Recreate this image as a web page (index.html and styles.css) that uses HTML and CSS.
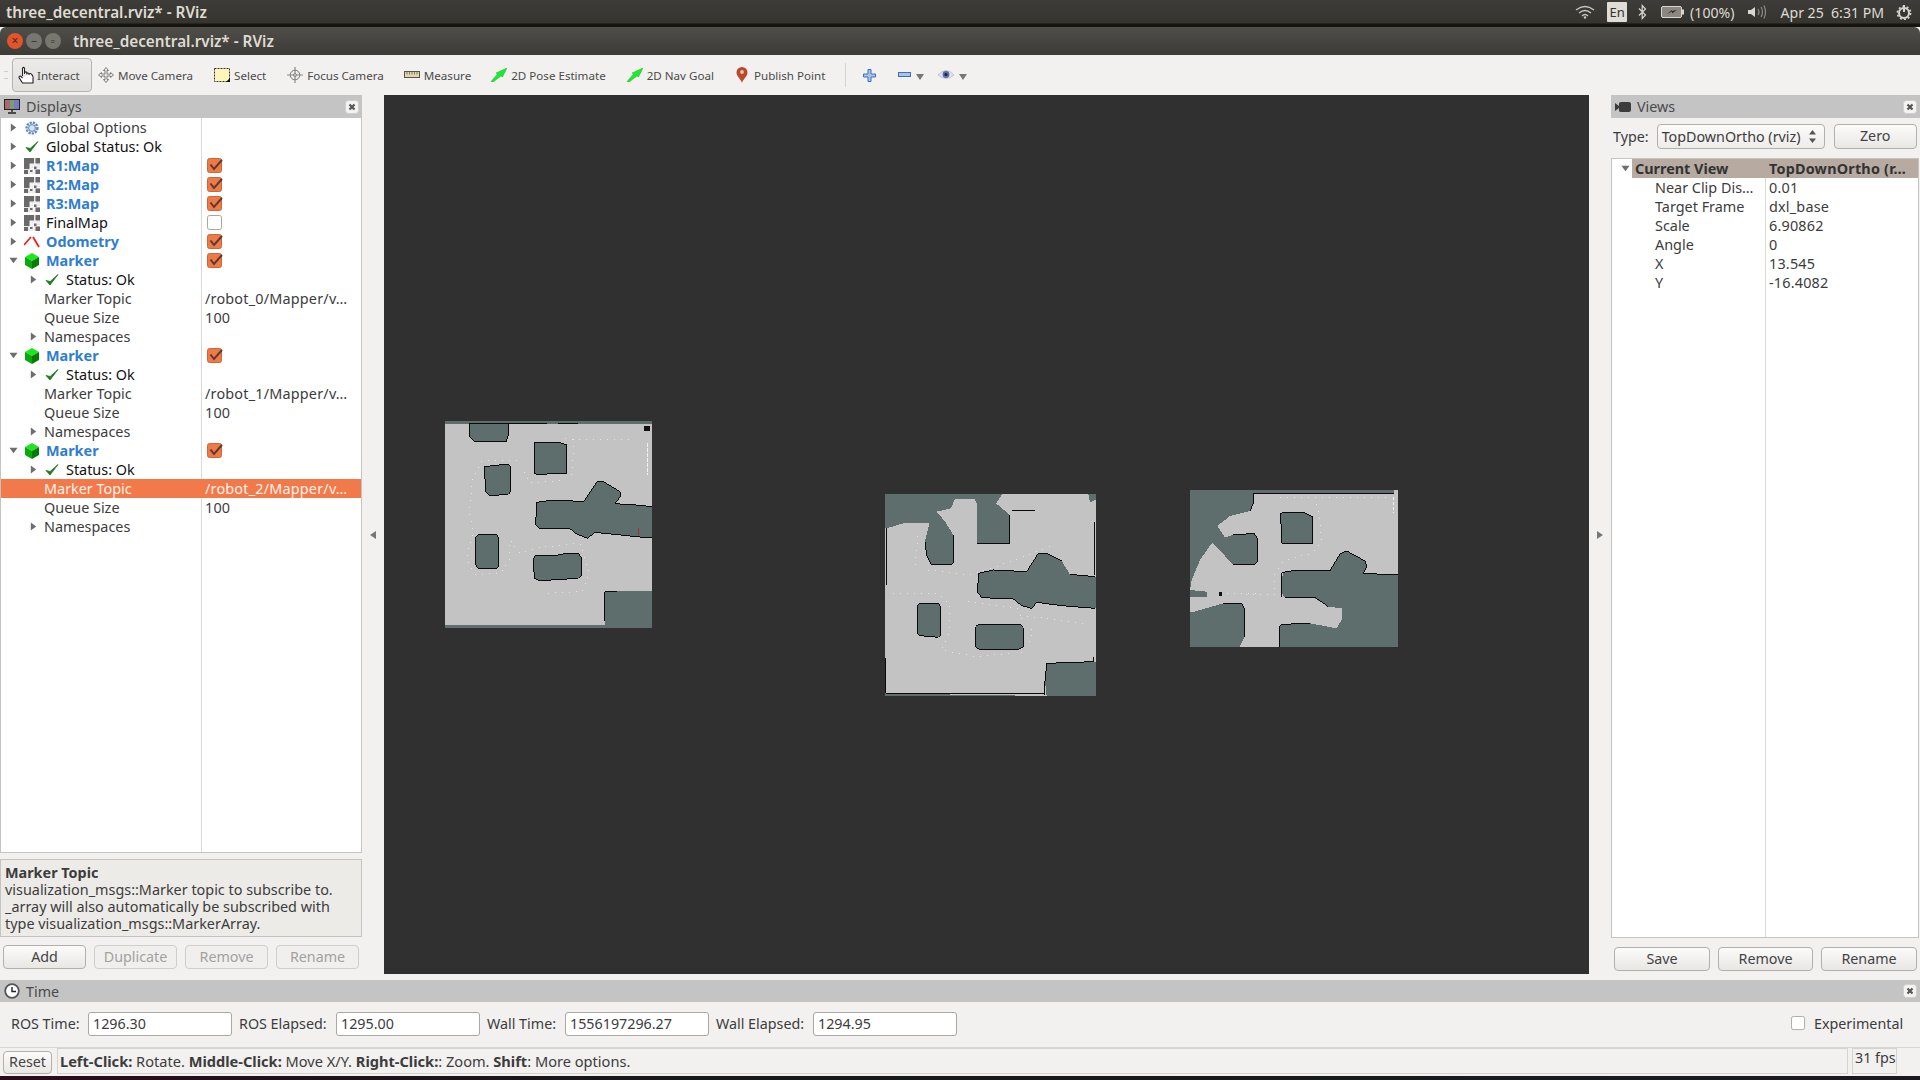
FILE: index.html
```html
<!DOCTYPE html>
<html lang="en">
<head>
    <meta charset="UTF-8">
    <title>three_decentral.rviz* - RViz</title>
    <link rel="stylesheet" href="styles.css">
</head>
<body>
    <svg class="defs" xmlns="http://www.w3.org/2000/svg">
        <symbol id="i-right" viewBox="0 0 8 10"><path d="M1 0.5 7 5 1 9.5Z" fill="#6e6e6e"/></symbol>
        <symbol id="i-down" viewBox="0 0 10 8"><path d="M0.5 1H9.5L5 7Z" fill="#6e6e6e"/></symbol>
        <symbol id="i-gear" viewBox="0 0 16 16"><circle cx="8" cy="8" r="5.4" fill="none" stroke="#5b86c9" stroke-width="2.4" stroke-dasharray="2.2 1"/><circle cx="8" cy="8" r="3.4" fill="#dce6f5" stroke="#4f7cc4"/></symbol>
        <symbol id="i-check" viewBox="0 0 16 16"><path d="M2 8.5 6 13 14 2.5 6.2 9.5Z" fill="#1f7a23" stroke="#1f7a23" stroke-width=".8"/></symbol>
        <symbol id="i-map" viewBox="0 0 16 16"><rect width="16" height="16" fill="#e6e6e6"/><path d="M5 5.500H16M5 8H16M5 10.500H16M5 13H16M7 5V16M9.500 5V16M12 5V16" stroke="#fff" stroke-width=".7"/><path d="M0 0H10V5.500H5.500V11H0ZM11.500 0H16V5.500H11.500ZM0 12H4V16H0ZM10 8.500H12.500V11H10ZM11.500 11.500H16V16H11.500ZM6 12H8.500V14H6Z" fill="#6a6a6a"/></symbol>
        <symbol id="i-odom" viewBox="0 0 16 16"><path d="M0 11 7 3M9 3 15 13" stroke="#f02020" stroke-width="1.8" fill="none"/></symbol>
        <symbol id="i-cube" viewBox="0 0 16 16"><path d="M8 0 15 4 8 8 1 4Z" fill="#1ee51e"/><path d="M1 4 8 8V16L1 12Z" fill="#0aa80a"/><path d="M15 4 8 8V16L15 12Z" fill="#067c06"/></symbol>
        <symbol id="i-on" viewBox="0 0 16 16"><rect x=".5" y=".5" width="14" height="14" rx="2" fill="#ee7a48" stroke="#c9683d"/><path d="M3.5 6.5 7 11 15 2" fill="none" stroke="#5f3a2c" stroke-width="2"/></symbol>
        <symbol id="i-off" viewBox="0 0 16 16"><rect x=".5" y=".5" width="14" height="14" rx="2" fill="#fff" stroke="#a9a6a1"/></symbol>
        <symbol id="i-close" viewBox="0 0 14 14"><rect x=".5" y=".5" width="13" height="13" rx="3" fill="#f4f3f2" stroke="#d0cfcc"/><path d="M4.5 4.5 9.5 9.5M9.5 4.5 4.5 9.5" stroke="#555" stroke-width="2.2"/></symbol>
    </svg>

    <div class="topbar">
        <span class="top-title">three_decentral.rviz* - RViz</span>
        <div class="tray">
            <svg class="tray-wifi" width="20" height="14" viewBox="0 0 20 14"><path d="M1 5Q10-2 19 5M4 8Q10 3 16 8M7 11Q10 8 13 11" fill="none" stroke="#c9c7c0" stroke-width="1.4"/><circle cx="10" cy="12.5" r="1.2" fill="#c9c7c0"/></svg>
            <span class="tray-lang">En</span>
            <svg class="tray-bt" width="9" height="16" viewBox="0 0 9 16"><path d="M1 4.5 7.5 11 4.2 14.5V1.5L7.5 5 1 11.5" fill="none" stroke="#d8d6cf" stroke-width="1.2"/></svg>
            <svg class="tray-batt" width="23" height="12" viewBox="0 0 23 12"><rect x=".5" y=".5" width="20" height="11" rx="1.5" fill="#8a8880" stroke="#d8d6cf"/><rect x="21" y="3.5" width="2" height="5" fill="#d8d6cf"/><path d="M6 8 11 5.5 11 7.5 16 4 11 5 11 4Z" fill="#2d2c28"/></svg>
            <span class="tray-pct">(100%)</span>
            <svg class="tray-vol" width="20" height="16" viewBox="0 0 20 16"><path d="M1 6H4L8 3V13L4 10H1Z" fill="#d8d6cf"/><path d="M11 5Q13 8 11 11M14 3Q17 8 14 13M17 1.5Q20 8 17 14.5" fill="none" stroke="#8d8b84" stroke-width="1.2"/></svg>
            <span class="tray-date">Apr 25&nbsp; 6:31 PM</span>
            <svg class="tray-gear" width="16" height="16" viewBox="0 0 16 16"><circle cx="8" cy="9" r="5" fill="none" stroke="#d8d6cf" stroke-width="2"/><circle cx="8" cy="9" r="6.6" fill="none" stroke="#d8d6cf" stroke-width="1.6" stroke-dasharray="2 2.2"/><path d="M8 1V8" stroke="#d8d6cf" stroke-width="2"/></svg>
        </div>
    </div>

    <div class="titlebar">
        <div class="win-buttons">
            <span class="win-btn win-close">×</span>
            <span class="win-btn">–</span>
            <span class="win-btn">▫</span>
        </div>
        <span class="win-title">three_decentral.rviz* - RViz</span>
    </div>

    <div class="toolbar">
        <span class="grip"></span>
        <div class="tool tool-active">
            <svg width="17" height="18" viewBox="0 0 17 18"><path d="M4.5 10V2.2Q5.5.6 6.5 2.2V8M6.5 8V6.5Q7.7 5.4 8.8 6.5V8.5M8.8 7.5Q10 6.4 11 7.5V9M11 8Q12.4 7 13.5 8.2 15.5 10 15 14V17H4.5L1 11.5Q1 9.8 2.5 10L4.5 12" fill="#fff" stroke="#222" stroke-width="1.1"/></svg>
            <span>Interact</span>
        </div>
        <div class="tool tool-move">
            <svg width="16" height="16" viewBox="0 0 16 16"><path d="M8 .5 10.5 3.5H9V7H12.5V5.5L15.5 8 12.5 10.5V9H9V12.5H10.5L8 15.5 5.5 12.5H7V9H3.5V10.5L.5 8 3.5 5.5V7H7V3.5H5.5Z" fill="#e8e8e8" stroke="#666" stroke-width=".8"/></svg>
            <span>Move Camera</span>
        </div>
        <div class="tool tool-select">
            <svg width="16" height="16" viewBox="0 0 16 16"><rect x=".5" y="1.5" width="15" height="13" fill="#fdf6b8" stroke="#333" stroke-dasharray="2 1"/><path d="M12 15H16V11Z" fill="#111"/></svg>
            <span>Select</span>
        </div>
        <div class="tool tool-focus">
            <svg width="16" height="16" viewBox="0 0 16 16"><circle cx="8" cy="8" r="4.8" fill="#eee" stroke="#777"/><path d="M8 0V16M0 8H16" stroke="#888" stroke-width="1.2"/><circle cx="8" cy="8" r="1.6" fill="#bbb" stroke="#777" stroke-width=".6"/></svg>
            <span>Focus Camera</span>
        </div>
        <div class="tool tool-measure">
            <svg width="16" height="8" viewBox="0 0 16 8"><rect x=".5" y=".5" width="15" height="6" fill="#e2d9a6" stroke="#555"/><path d="M3 1V3.5M5.5 1V3.5M8 1V3.5M10.5 1V3.5M13 1V3.5" stroke="#555" stroke-width=".7"/></svg>
            <span>Measure</span>
        </div>
        <div class="tool tool-pose">
            <svg width="16" height="14" viewBox="0 0 16 14"><path d="M0 13.5 6.5 6 5 5 16 0 11.5 9 10 8 2 14Z" fill="#19ee2c" stroke="#0e9e1c" stroke-width=".4"/></svg>
            <span>2D Pose Estimate</span>
        </div>
        <div class="tool tool-goal">
            <svg width="16" height="14" viewBox="0 0 16 14"><path d="M0 13.5 6.5 6 5 5 16 0 11.5 9 10 8 2 14Z" fill="#19ee2c" stroke="#0e9e1c" stroke-width=".4"/></svg>
            <span>2D Nav Goal</span>
        </div>
        <div class="tool tool-point">
            <svg width="12" height="16" viewBox="0 0 12 16"><path d="M6 16C5 12 .5 9.5.5 5.5a5.5 5.5 0 0 1 11 0C11.500 9.500 7 12 6 16Z" fill="#b8492a"/><circle cx="6" cy="5" r="1.9" fill="#e9c7a8"/></svg>
            <span>Publish Point</span>
        </div>
        <span class="tool-sep"></span>
        <svg class="tb-plus" width="13" height="13" viewBox="0 0 13 13"><path d="M5 .5H8V5H12.500V8H8V12.500H5V8H.5V5H5Z" fill="#a9c4ea" stroke="#3f6fb5"/></svg>
        <svg class="tb-minus" width="13" height="6" viewBox="0 0 13 6"><rect x=".5" y=".5" width="12" height="4" fill="#a9c4ea" stroke="#3f6fb5"/></svg>
        <svg class="tb-arrow" width="8" height="6" viewBox="0 0 8 6"><path d="M0 0H8L4 6Z" fill="#777"/></svg>
        <svg class="tb-eye" width="16" height="12" viewBox="0 0 16 12"><path d="M0 6Q8-3 16 6 8 13 0 6Z" fill="#dfe3ee" stroke="#a9adba" stroke-width=".6"/><circle cx="8" cy="5.500" r="3.400" fill="#5a6ca8"/><circle cx="8" cy="5.500" r="1.500" fill="#1c2340"/></svg>
        <svg class="tb-arrow" width="8" height="6" viewBox="0 0 8 6"><path d="M0 0H8L4 6Z" fill="#777"/></svg>
    </div>

    <div class="workspace">
        <div class="dock dock-left">
            <div class="dock-title">
                <svg width="16" height="15" viewBox="0 0 16 15"><rect x=".5" y=".5" width="15" height="10" fill="#7a9a7a" stroke="#222"/><rect x="1" y="1" width="5" height="9" fill="#a86a70"/><rect x="10" y="1" width="5" height="9" fill="#7a7ac0"/><path d="M8 11V13M4 14H12" stroke="#222" stroke-width="1.400"/></svg>
                <span class="dock-name">Displays</span>
                <svg class="close" width="14" height="14"><use href="#i-close"/></svg>
            </div>
            <div class="tree tree-displays">
                <div class="row"><div class="name"><svg class="tw"><use href="#i-right"/></svg><svg class="ico"><use href="#i-gear"/></svg><span class="muted">Global Options</span></div><div class="val"></div></div>
                <div class="row"><div class="name"><svg class="tw"><use href="#i-right"/></svg><svg class="ico"><use href="#i-check"/></svg><span class="dark">Global Status: Ok</span></div><div class="val"></div></div>
                <div class="row"><div class="name"><svg class="tw"><use href="#i-right"/></svg><svg class="ico"><use href="#i-map"/></svg><span class="blue">R1:Map</span></div><div class="val"><svg class="cb"><use href="#i-on"/></svg></div></div>
                <div class="row"><div class="name"><svg class="tw"><use href="#i-right"/></svg><svg class="ico"><use href="#i-map"/></svg><span class="blue">R2:Map</span></div><div class="val"><svg class="cb"><use href="#i-on"/></svg></div></div>
                <div class="row"><div class="name"><svg class="tw"><use href="#i-right"/></svg><svg class="ico"><use href="#i-map"/></svg><span class="blue">R3:Map</span></div><div class="val"><svg class="cb"><use href="#i-on"/></svg></div></div>
                <div class="row"><div class="name"><svg class="tw"><use href="#i-right"/></svg><svg class="ico"><use href="#i-map"/></svg><span class="dark">FinalMap</span></div><div class="val"><svg class="cb"><use href="#i-off"/></svg></div></div>
                <div class="row"><div class="name"><svg class="tw"><use href="#i-right"/></svg><svg class="ico"><use href="#i-odom"/></svg><span class="blue">Odometry</span></div><div class="val"><svg class="cb"><use href="#i-on"/></svg></div></div>

                <div class="row"><div class="name"><svg class="tw"><use href="#i-down"/></svg><svg class="ico"><use href="#i-cube"/></svg><span class="blue">Marker</span></div><div class="val"><svg class="cb"><use href="#i-on"/></svg></div></div>
                <div class="row"><div class="name sub"><svg class="tw"><use href="#i-right"/></svg><svg class="ico"><use href="#i-check"/></svg><span class="dark">Status: Ok</span></div><div class="val"></div></div>
                <div class="row"><div class="name prop">Marker Topic</div><div class="val">/robot_0/Mapper/v…</div></div>
                <div class="row"><div class="name prop">Queue Size</div><div class="val">100</div></div>
                <div class="row"><div class="name sub"><svg class="tw tw-gap"><use href="#i-right"/></svg>Namespaces</div><div class="val"></div></div>

                <div class="row"><div class="name"><svg class="tw"><use href="#i-down"/></svg><svg class="ico"><use href="#i-cube"/></svg><span class="blue">Marker</span></div><div class="val"><svg class="cb"><use href="#i-on"/></svg></div></div>
                <div class="row"><div class="name sub"><svg class="tw"><use href="#i-right"/></svg><svg class="ico"><use href="#i-check"/></svg><span class="dark">Status: Ok</span></div><div class="val"></div></div>
                <div class="row"><div class="name prop">Marker Topic</div><div class="val">/robot_1/Mapper/v…</div></div>
                <div class="row"><div class="name prop">Queue Size</div><div class="val">100</div></div>
                <div class="row"><div class="name sub"><svg class="tw tw-gap"><use href="#i-right"/></svg>Namespaces</div><div class="val"></div></div>

                <div class="row"><div class="name"><svg class="tw"><use href="#i-down"/></svg><svg class="ico"><use href="#i-cube"/></svg><span class="blue">Marker</span></div><div class="val"><svg class="cb"><use href="#i-on"/></svg></div></div>
                <div class="row"><div class="name sub"><svg class="tw"><use href="#i-right"/></svg><svg class="ico"><use href="#i-check"/></svg><span class="dark">Status: Ok</span></div><div class="val"></div></div>
                <div class="row row-selected"><div class="name prop">Marker Topic</div><div class="val">/robot_2/Mapper/v…</div></div>
                <div class="row"><div class="name prop">Queue Size</div><div class="val">100</div></div>
                <div class="row"><div class="name sub"><svg class="tw tw-gap"><use href="#i-right"/></svg>Namespaces</div><div class="val"></div></div>
            </div>
            <div class="help">
                <strong>Marker Topic</strong><br>
                visualization_msgs::Marker topic to subscribe to.<br>
                _array will also automatically be subscribed with<br>
                type visualization_msgs::MarkerArray.
            </div>
            <div class="btn-row btn-row-left">
                <button class="btn">Add</button>
                <button class="btn" disabled>Duplicate</button>
                <button class="btn" disabled>Remove</button>
                <button class="btn" disabled>Rename</button>
            </div>
        </div>

        <div class="split"><svg width="6" height="8" viewBox="0 0 6 8"><path d="M6 0V8L0 4Z" fill="#777"/></svg></div>

        <div class="viewport">
            <svg class="maps" width="1205" height="879" xmlns="http://www.w3.org/2000/svg">
                <!-- map coordinates are 3x, taken from the zoomed crops -->
                <g transform="translate(46 315) scale(.33333)">
                    <rect x="45" y="33" width="621" height="621" fill="#c3c3c3"/>
                    <rect x="45" y="33" width="621" height="8" fill="#5e6e6c"/>
                    <rect x="45" y="645" width="621" height="9" fill="#5e6e6c"/>
                    <path class="obs" d="M117 41H237V70L228 95H135L120 82Z"/>
                    <path class="obs" d="M313 97H385L411 105V190L320 193 313 190Z"/>
                    <path class="obs" d="M163 170 235 162 242 170V245L235 253 178 257 167 245Z"/>
                    <path class="obs-soft" d="M320 277 360 271 462 274 500 216H522L570 245 572 258 555 281 618 285 666 290V384L630 381 495 367 472 385 440 372 420 357 330 356 317 345Z"/>
                    <path class="edge" d="M666 290 618 285 555 281 572 258 570 245 522 216H500L462 274 360 271 320 277 317 345 330 356H420L440 372 472 385 495 367 630 381 666 384"/>
                    <path class="obs" d="M136 385 145 373H200L206 385V470L200 476H145L137 465Z"/>
                    <path class="obs" d="M310 445 318 436H380L410 430H445L455 445V495L445 505 330 512 313 505Z"/>
                    <path class="obs-soft" d="M525 645V545L666 543V645Z"/>
                    <path class="edge" d="M525 633V545H560"/>
                    <path class="edge" d="M237 41H350M385 41H443"/>
                    <path class="trail" d="M405 85 430 88 610 90M430 88 428 190 400 212 300 218 272 170 260 152 155 152 128 205 118 310 130 360 110 445 135 493 210 490 240 450 240 390 270 430 330 412 450 400 478 490 455 545 350 550"/>
                    <path class="trail-bright" d="M652 100V195"/>
                    <path d="M643 47H660V63H643Z" fill="#111"/>
                    <path d="M625 355V376" stroke="#a03030" stroke-width="3"/>
                </g>
                <g transform="translate(491 390) scale(.33333)">
                    <rect x="30" y="27" width="632" height="606" fill="#c3c3c3"/>
                    <path class="obs-soft" d="M30 27H382L363 55 405 90V177H307V60L298 42H240L228 70 185 80 210 110 235 150V235L225 240H170L155 210 150 170 163 115H85L35 130H30Z"/>
                    <path class="obs" d="M128 362 135 355H190L197 365V450L190 457 135 452 128 445Z"/>
                    <path class="obs" d="M302 425 310 418H435L445 428V485L435 492 315 495 302 485Z"/>
                    <path class="obs-soft" d="M310 265 355 255 455 260 490 205H515L560 228 585 268 662 275V370L560 362 485 352 470 370 440 362 415 342 320 338 308 322Z"/>
                    <path class="edge" d="M455 260 355 255 310 265 308 322 320 338 415 342 440 362 470 370 485 352 560 362 660 370M455 260 490 205H515L560 228M585 268 660 275"/>
                    <path class="obs-soft" d="M515 535 662 530V633H515L510 590Z"/>
                    <path class="edge" d="M510 630V590L515 535 655 530V515"/>
                    <path class="obs-soft" d="M30 625 190 628 515 633H30ZM640 27H662V45L645 52Z"/>
                    <path class="edge" d="M35 130V300M405 90V177H307M235 150V235L225 240H170L155 210 150 170M32 520V625H190 510M660 110V270M410 78H480"/>
                    <path class="trail" d="M55 325H190L225 360 225 440 200 495 300 515 450 500 475 440 430 390 630 415M120 240 130 140M160 255 290 270 420 225 530 182M280 350 430 370"/>
                </g>
                <g transform="translate(796 385) scale(.33333)">
                    <rect x="30" y="30" width="624" height="470" fill="#c3c3c3"/>
                    <path class="obs-soft" d="M30 30H222V65L210 93 150 108 112 138 135 172 160 165 222 160 232 175V245L222 255H160L97 187 60 240 35 300 30 330Z"/>
                    <path class="obs-soft" d="M222 30H642V40H222Z"/>
                    <path class="obs-soft" d="M30 330 80 335V350H30Z"/>
                    <path class="obs" d="M302 100 310 97H370L398 110V190H305Z"/>
                    <path class="obs-soft" d="M35 397 130 370H185L193 385V470L180 500H30V397Z"/>
                    <path class="obs-soft" d="M308 278 350 270 450 272 480 222 500 213 555 243 560 260 550 280 654 285V500H298V440L305 433 390 430 470 445 487 415V385L445 380 405 355 315 352 305 340Z"/>
                    <path class="edge" d="M222 40H642M222 40V65L210 93M160 165 222 160 232 175V245L222 255H160M130 370H185L193 385V470M305 352 305 278 350 270 450 272 480 222 500 213 555 243 560 260 550 280 654 285M298 500V440L305 433 390 430M315 352H405L445 380"/>
                    <path class="trail" d="M300 52H620M405 52 420 120 425 185 395 220 310 242 285 280 285 345 180 342M120 342H240"/>
                    <path class="trail-bright" d="M640 50V100"/>
                    <path d="M116 335H125V348H116Z" fill="#111"/>
                </g>
            </svg>
        </div>

        <div class="split"><svg width="6" height="8" viewBox="0 0 6 8"><path d="M0 0V8L6 4Z" fill="#777"/></svg></div>

        <div class="dock dock-right">
            <div class="dock-title">
                <svg width="16" height="10" viewBox="0 0 16 10"><path d="M0 1 4 4V1.500Q4 0 6 0H14Q16 0 16 2V8Q16 10 14 10H6Q4 10 4 8.500V6L0 9Z" fill="#3c3c3c"/></svg>
                <span class="dock-name">Views</span>
                <svg class="close" width="14" height="14"><use href="#i-close"/></svg>
            </div>
            <div class="type-row">
                <span>Type:</span>
                <div class="combo"><span>TopDownOrtho (rviz)</span><svg width="7" height="13" viewBox="0 0 7 13"><path d="M0 4.500 3.500 0 7 4.500ZM0 8.500H7L3.500 13Z" fill="#555"/></svg></div>
                <button class="btn btn-zero">Zero</button>
            </div>
            <div class="tree tree-views">
                <div class="row row-head"><div class="name"><svg class="tw tw-head"><use href="#i-down"/></svg><span>Current View</span></div><div class="val">TopDownOrtho (r…</div></div>
                <div class="row"><div class="name prop">Near Clip Dis…</div><div class="val">0.01</div></div>
                <div class="row"><div class="name prop">Target Frame</div><div class="val">dxl_base</div></div>
                <div class="row"><div class="name prop">Scale</div><div class="val">6.90862</div></div>
                <div class="row"><div class="name prop">Angle</div><div class="val">0</div></div>
                <div class="row"><div class="name prop">X</div><div class="val">13.545</div></div>
                <div class="row"><div class="name prop">Y</div><div class="val">-16.4082</div></div>
            </div>
            <div class="btn-row btn-row-right">
                <button class="btn">Save</button>
                <button class="btn">Remove</button>
                <button class="btn">Rename</button>
            </div>
        </div>
    </div>

    <div class="time-title">
        <svg width="16" height="16" viewBox="0 0 16 16"><circle cx="8" cy="8" r="6.800" fill="#fff" stroke="#555" stroke-width="1.800"/><path d="M8 4V8.500H12" fill="none" stroke="#222" stroke-width="1.400"/></svg>
        <span class="dock-name">Time</span>
        <svg class="close" width="14" height="14"><use href="#i-close"/></svg>
    </div>
    <div class="time-row">
        <label class="t-ros">ROS Time:</label><div class="field">1296.30</div>
        <label class="t-ela">ROS Elapsed:</label><div class="field">1295.00</div>
        <label class="t-wall">Wall Time:</label><div class="field">1556197296.27</div>
        <label class="t-wela">Wall Elapsed:</label><div class="field">1294.95</div>
        <svg class="exp-box" width="15" height="15"><use href="#i-off"/></svg>
        <label>Experimental</label>
    </div>

    <div class="statusbar">
        <button class="btn btn-reset">Reset</button>
        <div class="hint"><b>Left-Click:</b> Rotate. <b>Middle-Click:</b> Move X/Y. <b>Right-Click:</b>: Zoom. <b>Shift</b>: More options.</div>
        <div class="fps">31 fps</div>
    </div>
    <div class="desktop"></div>
</body>
</html>
```

FILE: styles.css
```css
* {
    box-sizing: border-box;
}
html, body {
    margin: 0;
    padding: 0;
}
body {
    width: 1920px;
    height: 1080px;
    overflow: hidden;
    display: flex;
    flex-direction: column;
    background-color: #f2f1f0;
    color: #3c3c3c;
    font-family: "Noto Sans", sans-serif;
    font-size: 14.3px;
}
.defs {
    width: 0;
    height: 0;
    flex: none;
}
svg {
    flex: none;
    display: block;
}

/* desktop bar */
.topbar {
    height: 27px;
    flex: none;
    display: flex;
    align-items: center;
    padding: 0 8px 3px 6px;
    background: linear-gradient(#3d3c38 0, #35342f 23px, #15140f 24px);
    color: #dfdbd2;
}
.top-title {
    font-weight: 600;
    font-size: 15.3px;
}
.tray {
    margin-left: auto;
    display: flex;
    align-items: center;
    font-size: 14.1px;
}
.tray-lang {
    width: 20px;
    height: 20px;
    margin-left: 12px;
    background-color: #e0ddd6;
    color: #333;
    font-size: 13px;
    text-align: center;
    line-height: 20px;
    border-radius: 1px;
}
.tray-bt { margin-left: 11px; }
.tray-batt { margin-left: 14px; }
.tray-pct { margin-left: 6px; }
.tray-vol { margin-left: 13px; }
.tray-date { margin-left: 13px; }
.tray-gear { margin-left: 12px; }

/* window title */
.titlebar {
    height: 28px;
    flex: none;
    display: flex;
    align-items: center;
    background: linear-gradient(#4f4e49, #3c3b37);
    border-radius: 6px 6px 0 0;
    color: #dfdbd2;
}
.win-buttons {
    display: flex;
    gap: 3px;
    padding-left: 7px;
}
.win-btn {
    width: 16px;
    height: 16px;
    border-radius: 50%;
    background-color: #77766f;
    color: #3a3935;
    font-size: 12px;
    line-height: 15px;
    text-align: center;
}
.win-close {
    background-color: #e0552c;
    color: #5a2210;
}
.win-title {
    margin-left: 12px;
    font-weight: 600;
    font-size: 15.3px;
}

/* toolbar */
.toolbar {
    height: 40px;
    flex: none;
    display: flex;
    align-items: center;
    padding-left: 4px;
    color: #4a4a4a;
    font-size: 11.6px;
}
.grip {
    width: 4px;
    height: 8px;
    margin-right: 4px;
    border-top: 1px solid #ccc;
    border-bottom: 1px solid #ccc;
}
.tool {
    display: flex;
    align-items: center;
    gap: 4px;
}
.tool-active {
    width: 80px;
    height: 34px;
    padding-left: 5px;
    gap: 2px;
    border: 1px solid #b5b3ae;
    border-radius: 4px;
    background: linear-gradient(#ecebe9, #e2e0dd);
}
.tool-move { margin-left: 6px; }
.tool-select { margin-left: 21px; }
.tool-focus { margin-left: 21px; }
.tool-measure { margin-left: 20px; }
.tool-pose { margin-left: 20px; }
.tool-goal { margin-left: 21px; }
.tool-point { margin-left: 22px; gap: 6px; }
.tool-sep {
    width: 1px;
    height: 24px;
    margin-left: 20px;
    background-color: #d5d3cf;
}
.tb-plus { margin-left: 17px; }
.tb-minus { margin-left: 22px; }
.tb-arrow { margin: 4px 0 0 5px; }
.tb-eye { margin-left: 14px; }

/* main area */
.workspace {
    height: 885px;
    flex: none;
    display: flex;
}
.dock {
    display: flex;
    flex-direction: column;
}
.dock-left {
    width: 362px;
}
.dock-right {
    width: 309px;
}
.split {
    width: 22px;
    height: 879px;
    display: flex;
    align-items: center;
    justify-content: center;
}
.viewport {
    width: 1205px;
    height: 879px;
    background-color: #303030;
}
.maps {
    shape-rendering: crispEdges;
}
.obs {
    fill: #5e6e6c;
    stroke: #0a0a0a;
    stroke-width: 3;
}
.obs-soft {
    fill: #5e6e6c;
}
.edge {
    fill: none;
    stroke: #0a0a0a;
    stroke-width: 3;
}
.trail {
    fill: none;
    stroke: #e6e6e6;
    stroke-width: 3;
    stroke-dasharray: 3 18;
}
.trail-bright {
    fill: none;
    stroke: #f2f2f2;
    stroke-width: 4;
    stroke-dasharray: 10 5;
}
.dock-title, .time-title {
    height: 23px;
    flex: none;
    display: flex;
    align-items: center;
    padding: 0 3px 0 4px;
    background-color: #c4c4c4;
    color: #4a4a4a;
}
.time-title {
    height: 22px;
}
.dock-name {
    margin-left: 6px;
}
.close {
    margin-left: auto;
}

/* property trees */
.tree {
    flex: none;
    background: linear-gradient(#dbd9d5, #dbd9d5) no-repeat #fff;
    border: 1px solid #c6c4c0;
}
.tree-displays {
    height: 735px;
    border-top: 0;
    background-position: 200px 0;
    background-size: 1px 100%;
}
.tree-views {
    width: 308px;
    height: 780px;
    margin-top: 9px;
    background-position: 153px 0;
    background-size: 1px 100%;
}
.row {
    height: 19px;
    display: grid;
    grid-template-columns: 200px 1fr;
    line-height: 19px;
    white-space: nowrap;
    font-size: 14.4px;
}
.tree-views .row {
    grid-template-columns: 153px 1fr;
}
.name {
    display: flex;
    align-items: center;
    padding-left: 8px;
    overflow: hidden;
}
.name.sub {
    padding-left: 28px;
}
.name.prop {
    padding-left: 43px;
}
.val {
    display: flex;
    align-items: center;
    padding-left: 4px;
    overflow: hidden;
    letter-spacing: .2px;
}
.tw {
    width: 9px;
    height: 9px;
    margin-right: 1px;
}
.tw-gap {
    margin-right: 6px;
}
.ico {
    width: 16px;
    height: 16px;
    margin: 0 6px 0 5px;
}
.cb {
    width: 16px;
    height: 16px;
    margin-left: 2px;
}
.muted {
    color: #3c3c3c;
}
.dark {
    color: #111;
}
.blue {
    color: #2f7dd1;
    font-weight: 700;
}
.row-selected {
    background-color: #f27a4a;
    color: #fdf1ea;
}
.row-head {
    margin-left: 20px;
    margin-right: 0;
    background-color: #b6aaa1;
    font-weight: 700;
    color: #333;
}
.tree-views .row-head {
    grid-template-columns: 133px 1fr;
}
.row-head .name {
    padding-left: 3px;
    overflow: visible;
}
.tw-head {
    margin-left: -14px;
    margin-right: 5px;
}

/* help + buttons */
.help {
    height: 78px;
    flex: none;
    margin-top: 6px;
    padding: 4px 4px 0;
    background-color: #edebe7;
    border: 1px solid #c6c4c0;
    line-height: 17px;
    white-space: nowrap;
    font-size: 14.4px;
}
.btn {
    height: 24px;
    padding: 0 0 2px;
    border: 1px solid #b3b0ab;
    border-radius: 4px;
    background: linear-gradient(#fbfbfa, #e9e7e4);
    color: #444;
    font-family: inherit;
    font-size: 14.3px;
}
.btn:disabled {
    color: #a3a19d;
    border-color: #d0cec9;
    background: #f0efed;
}
.btn-row {
    display: flex;
    flex: none;
}
.btn-row-left {
    gap: 8px;
    padding: 8px 3px 0;
}
.btn-row-left .btn {
    width: 83px;
}
.btn-row-right {
    gap: 8px;
    padding: 9px 0 0 3px;
}
.btn-row-right .btn {
    width: 96px;
}
.btn-row-right .btn:nth-child(2) {
    width: 95px;
}
.type-row {
    height: 25px;
    margin-top: 6px;
    flex: none;
    display: flex;
    align-items: center;
    padding-left: 2px;
}
.combo {
    width: 168px;
    height: 25px;
    margin-left: 8px;
    padding: 0 8px 0 4px;
    display: flex;
    align-items: center;
    justify-content: space-between;
    border: 1px solid #b3b0ab;
    border-radius: 4px;
    background: linear-gradient(#fbfbfa, #eeecea);
    white-space: nowrap;
}
.btn-zero {
    width: 83px;
    height: 25px;
    margin-left: 9px;
}

/* time panel */
.time-row {
    height: 46px;
    flex: none;
    display: flex;
    align-items: center;
    padding-bottom: 2px;
    border-bottom: 1px solid #d8d6d2;
}
.time-row label {
    white-space: nowrap;
}
.t-ros { margin-left: 11px; width: 77px; }
.t-ela { margin-left: 7px; width: 97px; }
.t-wall { margin-left: 7px; width: 78px; }
.t-wela { margin-left: 7px; width: 97px; }
.field {
    width: 144px;
    height: 24px;
    padding-left: 4px;
    border: 1px solid #aaa8a3;
    border-radius: 3px;
    background-color: #fff;
    line-height: 22px;
}
.exp-box {
    margin-left: 834px;
    margin-right: 8px;
}

/* status bar */
.statusbar {
    height: 28px;
    flex: none;
    display: flex;
    align-items: flex-start;
    padding-left: 3px;
    gap: 5px;
}
.btn-reset {
    width: 49px;
    height: 23px;
    margin-top: 3px;
}
.hint {
    width: 1791px;
    height: 26px;
    padding-left: 2px;
    border: 1px solid #d5d3cf;
    line-height: 24px;
    font-size: 14.6px;
}
.fps {
    width: 45px;
    height: 26px;
    margin-left: -1px;
    padding-left: 2px;
    border: 1px solid #d5d3cf;
    line-height: 18px;
}
.desktop {
    flex: 1;
    background: linear-gradient(90deg, #2a0c18, #14191c 40%, #1a1a1c);
}
```
